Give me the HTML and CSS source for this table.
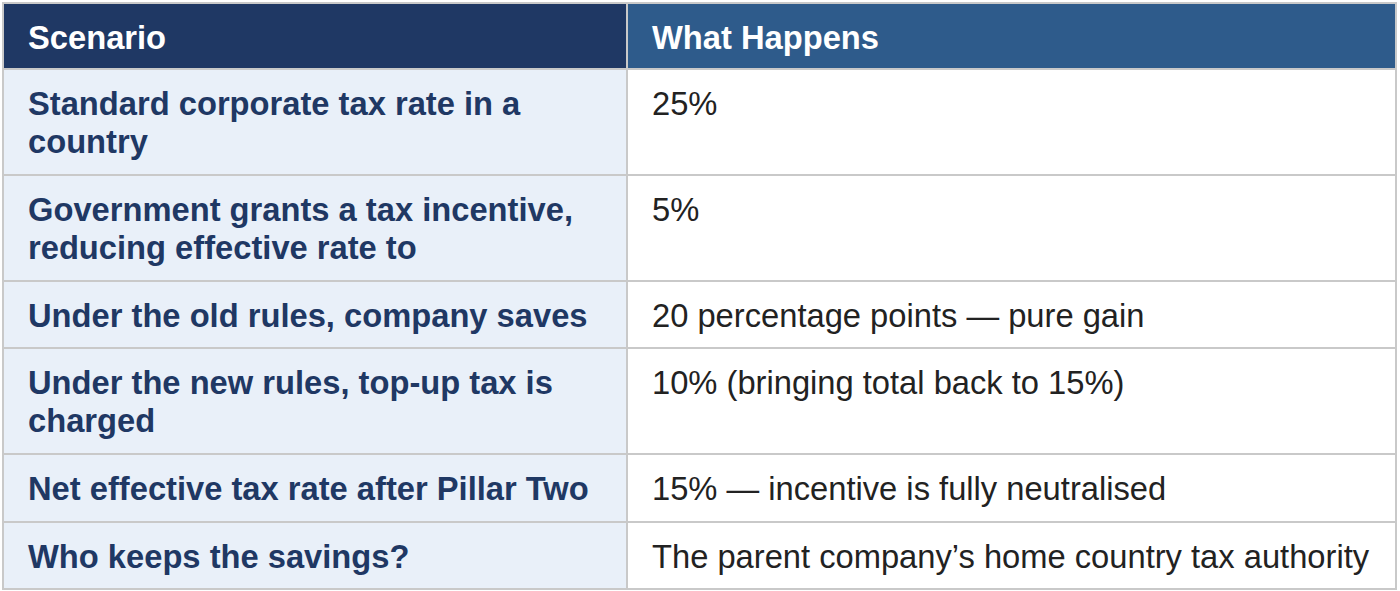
FILE: index.html
```html
<!DOCTYPE html>
<html lang="en">
<head>
<meta charset="utf-8">
<title>Pillar Two scenario</title>
<link rel="stylesheet" href="styles.css">
</head>
<body>
<table class="grid">
  <colgroup>
    <col class="col-scenario">
    <col class="col-result">
  </colgroup>
  <thead>
    <tr>
      <th class="head head-scenario">Scenario</th>
      <th class="head head-result">What Happens</th>
    </tr>
  </thead>
  <tbody>
    <tr class="row-tall">
      <td class="scenario">Standard corporate tax rate in a country</td>
      <td class="result">25%</td>
    </tr>
    <tr class="row-tall">
      <td class="scenario">Government grants a tax incentive, reducing effective rate to</td>
      <td class="result">5%</td>
    </tr>
    <tr class="row-short">
      <td class="scenario">Under the old rules, company saves</td>
      <td class="result">20 percentage points — pure gain</td>
    </tr>
    <tr class="row-tall">
      <td class="scenario">Under the new rules, top-up tax is charged</td>
      <td class="result">10% (bringing total back to 15%)</td>
    </tr>
    <tr class="row-mid">
      <td class="scenario">Net effective tax rate after Pillar Two</td>
      <td class="result">15% — incentive is fully neutralised</td>
    </tr>
    <tr class="row-last">
      <td class="scenario">Who keeps the savings?</td>
      <td class="result">The parent company’s home country tax authority</td>
    </tr>
  </tbody>
</table>
</body>
</html>
```
FILE: styles.css
```css
html, body {
  margin: 0;
  padding: 0;
  background: #ffffff;
}

body {
  padding: 2px;
  font-family: "Liberation Sans", Arial, Helvetica, sans-serif;
}

.grid {
  width: 1395px;
  border-collapse: collapse;
  table-layout: fixed;
  border: 2px solid #c9c9c9;
  font-size: 32.7px;
  line-height: 38px;
}

.col-scenario {
  width: 624px;
}

.grid th,
.grid td {
  border: 2px solid #c9c9c9;
  padding: 15px 24px 11px 24px;
  text-align: left;
  vertical-align: top;
  overflow: hidden;
}

.head {
  color: #ffffff;
  font-weight: bold;
  height: 38px;
  padding-top: 14px;
  padding-bottom: 12px;
}

.head-scenario {
  background: #1f3864;
}

.head-result {
  background: #2e5b8b;
}

.scenario {
  background: #e9f0f9;
  color: #1f3864;
  font-weight: bold;
}

.result {
  background: #ffffff;
  color: #222222;
}

.row-tall td {
  height: 78px;
}

.row-short td {
  height: 39px;
}

.row-mid td {
  height: 40px;
}

.row-last td {
  height: 39px;
}
```
